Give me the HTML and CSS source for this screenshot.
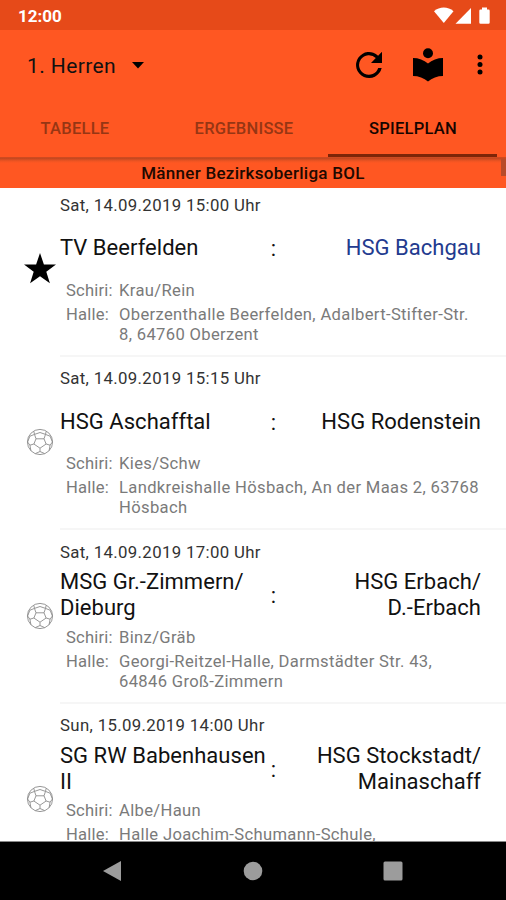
FILE: index.html
```html
<!DOCTYPE html>
<html lang="de">
<head>
<meta charset="utf-8">
<title>Spielplan</title>
<link rel="stylesheet" href="styles.css">
</head>
<body>
<svg class="defs" width="0" height="0">
  <symbol id="ball" viewBox="0 0 28 28">
    <g fill="none" stroke="#8c8c8c" stroke-width="0.9" stroke-linejoin="round">
      <circle cx="14" cy="14" r="12.6"/>
      <path d="M10 10.8h8l2.1 5.2-6.1 4.2L7.900 16zM10 10.800 8.500 6.400 14 4.500l5.500 1.900L18 10.800M8.500 6.400 7.800 3.300M19.500 6.400l.7-3.100M7.900 16l-4 1.200L1.600 14 3.900 8.200l4.600-1.800M20.100 16l4 1.200 2.300-3.200-2.300-5.800-4.600-1.800M14 20.200v3.300M3.900 17.200l1 5.400M24.100 17.200l-1 5.400M14 23.500l-4.700 2.100M14 23.500l4.700 2.100"/>
    </g>
  </symbol>
</svg>
<div class="screen">
  <header class="status">
    <span class="clock">12:00</span>
    <svg width="58" height="18" viewBox="0 0 58 18" fill="#fff">
      <path d="M0 4.200C5.500-.6 14-.6 19.500 4.200L9.800 16z"/>
      <path d="M21.500 16.800 37 1v15.800z"/>
      <path d="M48 .5h5v2h1.500q1.200 0 1.200 1.200v11.800q0 1.300-1.200 1.300h-8q-1.200 0-1.200-1.300V3.700q0-1.200 1.200-1.200H48z"/>
    </svg>
  </header>
  <div class="toolbar">
    <span class="team-select">1. Herren</span>
    <svg class="caret" width="12" height="7" viewBox="0 0 12 7"><path d="M0 0h12L6 6.600z"/></svg>
    <svg class="refresh" width="28" height="28" viewBox="0 0 28 28"><path d="M23.100 4.700A13 13 0 1 0 26.700 17h-3.500A9.800 9.800 0 1 1 20.800 7L16 11.900h11V.8z"/></svg>
    <svg class="reader" width="32" height="34" viewBox="0 0 32 34"><circle cx="16" cy="5.200" r="5"/><path d="M16 15.500C12 12 6.500 10 1 10v18c5.500 0 11 2 15 5.500 4-3.500 9.500-5.500 15-5.500V10c-5.500 0-11 2-15 5.500z"/></svg>
    <svg class="more" width="6" height="22" viewBox="0 0 6 22"><circle cx="3" cy="3" r="2.500"/><circle cx="3" cy="10.500" r="2.500"/><circle cx="3" cy="18" r="2.500"/></svg>
  </div>
  <nav class="tabs">
    <span class="tab">TABELLE</span>
    <span class="tab">ERGEBNISSE</span>
    <span class="tab active">SPIELPLAN</span>
  </nav>
  <div class="league">Männer Bezirksoberliga BOL<i class="thumb"></i></div>
  <main class="list">
    <article class="game">
      <svg class="mark" width="32" height="32" viewBox="0 0 32 32"><path d="M16 0l3.900 11.500H32l-9.700 7.200 3.600 11.600L16 23.200 6.100 30.300l3.600-11.600L0 11.500h12.100z"/></svg>
      <div class="body">
        <div class="date">Sat, 14.09.2019 15:00 Uhr</div>
        <div class="teams"><span class="home">TV Beerfelden</span><span class="colon">:</span><span class="away own">HSG Bachgau</span></div>
        <dl class="info"><dt>Schiri:</dt><dd>Krau/Rein</dd><dt>Halle:</dt><dd>Oberzenthalle Beerfelden, Adalbert-Stifter-Str.<br>8, 64760 Oberzent</dd></dl>
      </div>
    </article>
    <article class="game">
      <svg class="mark" width="28" height="28"><use href="#ball"/></svg>
      <div class="body">
        <div class="date">Sat, 14.09.2019 15:15 Uhr</div>
        <div class="teams"><span class="home">HSG Aschafftal</span><span class="colon">:</span><span class="away">HSG Rodenstein</span></div>
        <dl class="info"><dt>Schiri:</dt><dd>Kies/Schw</dd><dt>Halle:</dt><dd>Landkreishalle Hösbach, An der Maas 2, 63768<br>Hösbach</dd></dl>
      </div>
    </article>
    <article class="game">
      <svg class="mark" width="28" height="28"><use href="#ball"/></svg>
      <div class="body">
        <div class="date">Sat, 14.09.2019 17:00 Uhr</div>
        <div class="teams"><span class="home">MSG Gr.-Zimmern/<br>Dieburg</span><span class="colon">:</span><span class="away">HSG Erbach/<br>D.-Erbach</span></div>
        <dl class="info"><dt>Schiri:</dt><dd>Binz/Gräb</dd><dt>Halle:</dt><dd>Georgi-Reitzel-Halle, Darmstädter Str. 43,<br>64846 Groß-Zimmern</dd></dl>
      </div>
    </article>
    <article class="game tall">
      <svg class="mark" width="28" height="28"><use href="#ball"/></svg>
      <div class="body">
        <div class="date">Sun, 15.09.2019 14:00 Uhr</div>
        <div class="teams"><span class="home">SG RW Babenhausen<br>II</span><span class="colon">:</span><span class="away">HSG Stockstadt/<br>Mainaschaff</span></div>
        <dl class="info"><dt>Schiri:</dt><dd>Albe/Haun</dd><dt>Halle:</dt><dd>Halle Joachim-Schumann-Schule,</dd></dl>
      </div>
    </article>
  </main>
  <footer class="navbar">
    <svg width="20" height="22" viewBox="0 0 20 22"><path d="M0 11 18 1v20z"/></svg>
    <svg width="20" height="20" viewBox="0 0 20 20"><circle cx="10" cy="10" r="9.300"/></svg>
    <svg width="20" height="20" viewBox="0 0 20 20"><rect x=".5" y=".5" width="19" height="19" rx="1.500"/></svg>
  </footer>
</div>
</body>
</html>
```
FILE: styles.css
```css
* { box-sizing: border-box; }
body { margin: 0; font-family: Roboto, sans-serif; background: #fff; color: #111; }
.defs { display: block; height: 0; }
.screen { width: 506px; height: 900px; display: flex; flex-direction: column; overflow: hidden; }
.status { flex: none; height: 30px; background: #e64a19; display: flex; align-items: center; justify-content: space-between; padding: 1px 14px 0 18px; }
.clock { color: #fff; font-size: 17px; font-weight: 700; line-height: 20px; }
.toolbar { flex: none; height: 70px; background: #ff5722; display: flex; align-items: center; padding: 0 23px 0 27px; }
.team-select { font-size: 21px; line-height: 26px; letter-spacing: .4px; width: 105px; padding-top: 1px; white-space: nowrap; }
.caret { margin-right: auto; }
.refresh { margin-right: 29px; }
.reader { margin-right: 33px; }
.tabs { flex: none; height: 58px; background: #ff5722; display: flex; border-bottom: 1px solid #cf4a20; }
.tab { width: 169px; flex: none; text-align: center; font-size: 16.500px; font-weight: 500; line-height: 57px; letter-spacing: .25px; padding-left: 1px; color: #963614; }
.tab:first-child { margin-left: -10px; }
.tab.active { color: #170500; border-bottom: 3px solid #7d2508; }
.league { flex: none; height: 30px; background: linear-gradient(#bd4620, #ee5422 3px, #ff5722 5px); text-align: center; font-size: 17px; font-weight: 500; line-height: 31px; color: #200900; position: relative; z-index: 1; letter-spacing: .28px; }
.thumb { position: absolute; right: 0; top: 1px; width: 5px; height: 17px; background: #b84b29; }
.list { flex: 1; min-height: 0; overflow: hidden; margin-top: -5px; }
.game { height: 173.500px; display: grid; grid-template-columns: 60px 1fr; }
.game.tall { height: 192px; }
.mark { align-self: center; justify-self: end; margin: 0 6px 2px 0; }
.game:first-child .mark { margin-right: 4px; }
.body { border-bottom: 2px solid #f6f6f6; padding: 11.500px 25px 0 0; }
.date { font-size: 16.800px; line-height: 20px; letter-spacing: .34px; color: #333; }
.teams { display: grid; grid-template-columns: 208px 10px 1fr; height: 52px; margin-top: 7.500px; align-items: center; font-size: 22px; line-height: 26px; letter-spacing: .03px; white-space: nowrap; }
.colon { text-align: center; position: relative; top: 1px; left: .5px; }
.away { text-align: right; }
.own { color: #233b8f; }
.info { display: grid; grid-template-columns: 53px 1fr; row-gap: 4px; margin: 6.500px -20px 0 6px; font-size: 16.600px; line-height: 20px; letter-spacing: .34px; color: #7a7a7a; white-space: nowrap; }
.info dt { letter-spacing: .2px; }
.info dd { margin: 0; }
.navbar { flex: none; height: 59px; border-top: 1px solid #888; background: #000; display: flex; align-items: center; justify-content: space-between; padding: 0 103px; fill: #9c9c9c; }
```
